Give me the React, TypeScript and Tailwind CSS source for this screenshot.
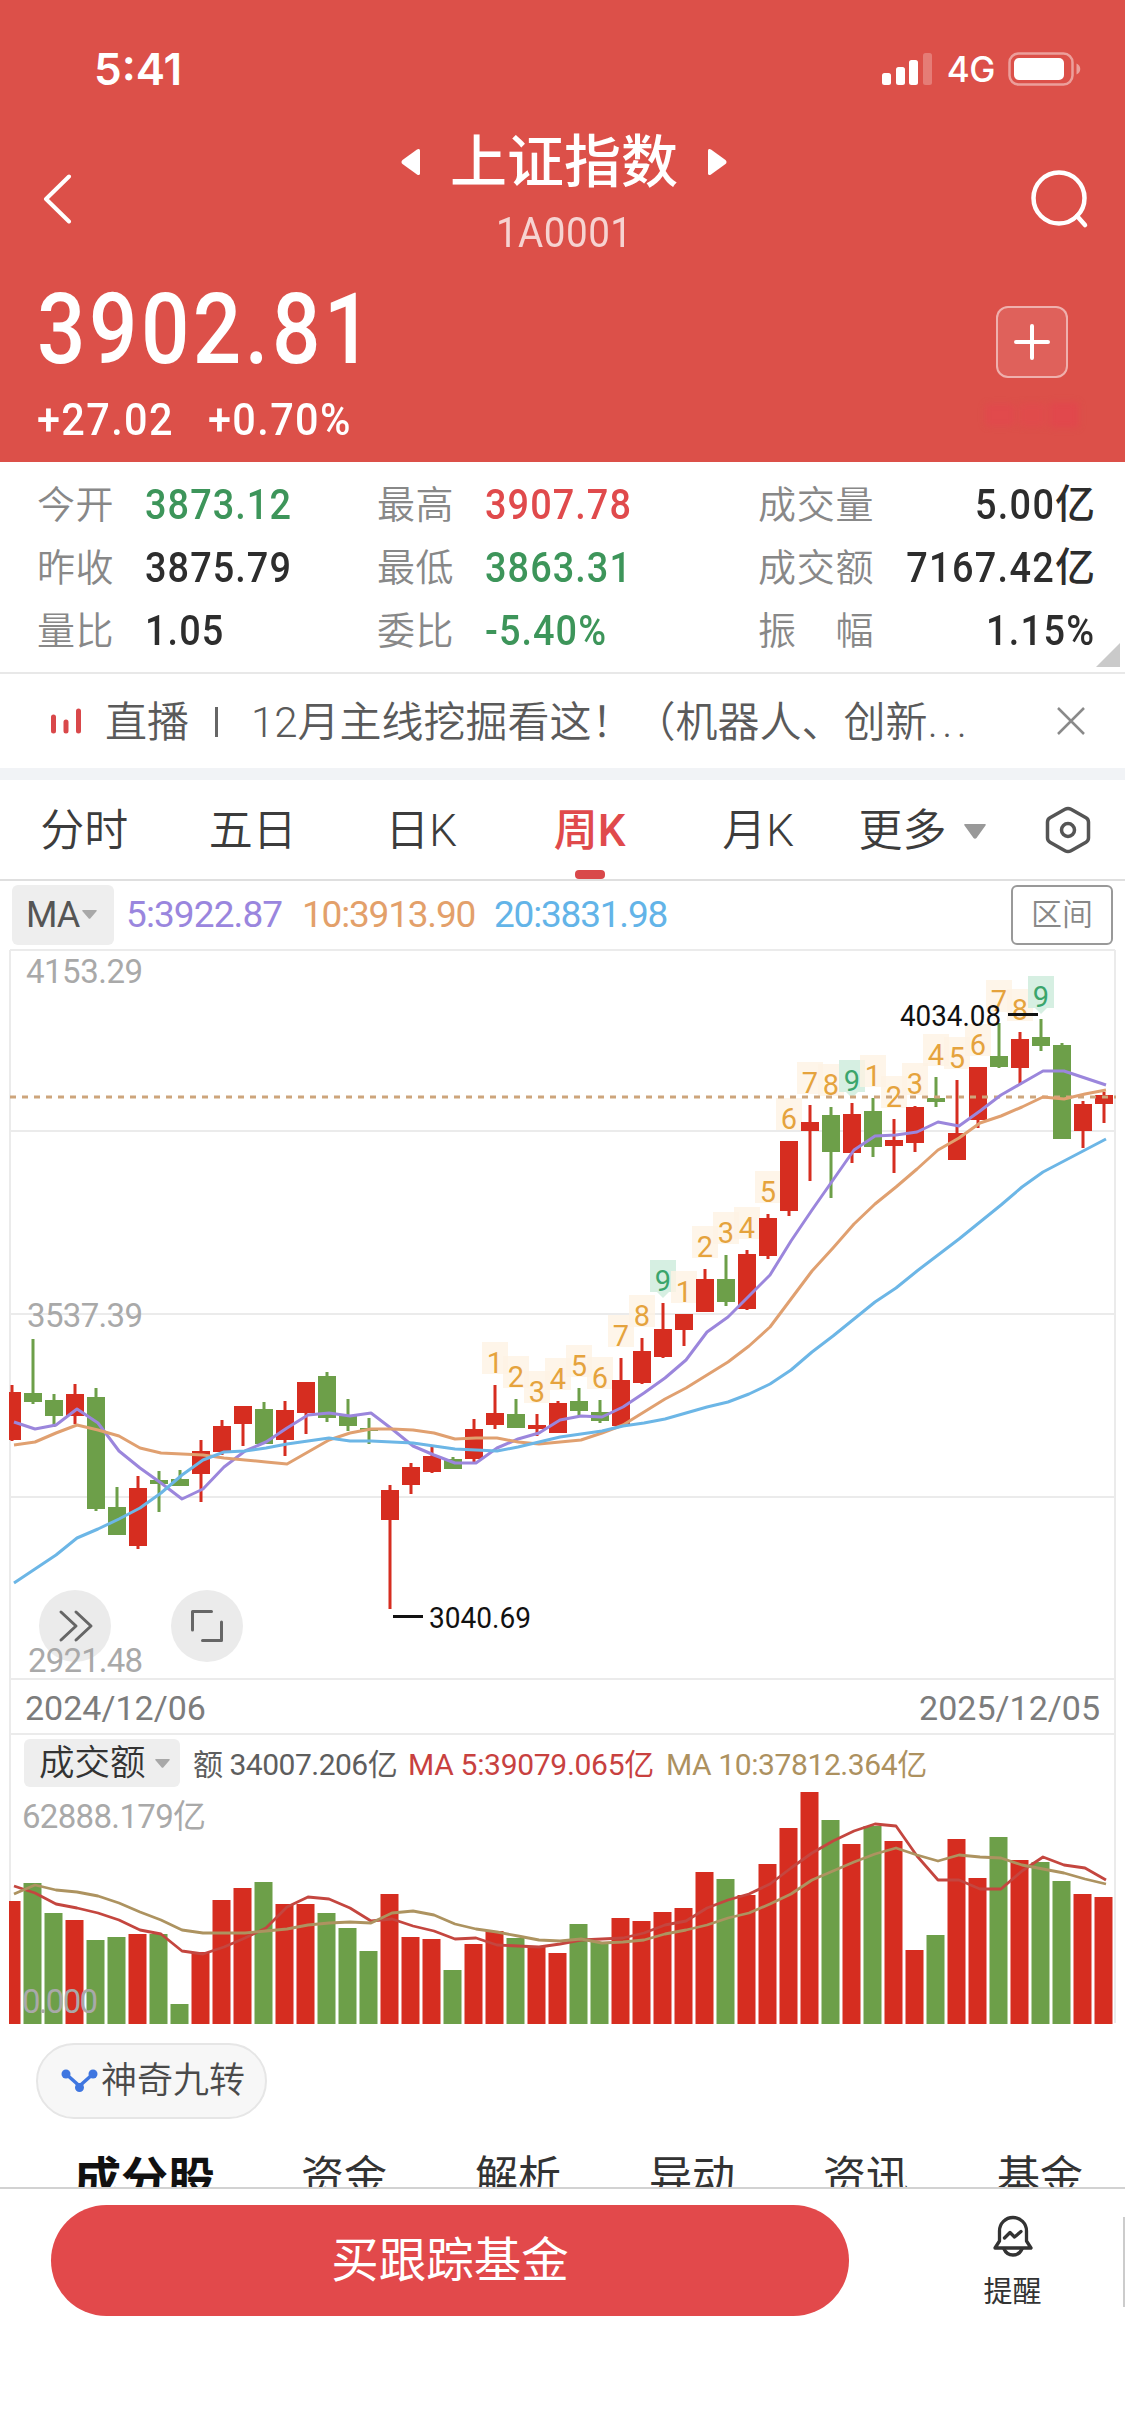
import React from 'react';

const RED = '#d62d20';
const GREEN = '#6d9f49';
const STEP = 21;
const centerX = (i: number) => 12 + i * STEP;

type Direction = 'up' | 'down';
// direction, high, body top, body bottom, low
type Candle = [Direction, number, number, number, number];

const candles: Candle[] = [
  ['up', 1385, 1392, 1440, 1441],
  ['down', 1339, 1393, 1402, 1404],
  ['down', 1394, 1400, 1416, 1427],
  ['up', 1384, 1394, 1416, 1424],
  ['down', 1388, 1397, 1509, 1511],
  ['down', 1487, 1507, 1535, 1535],
  ['up', 1476, 1488, 1546, 1549],
  ['down', 1471, 1480, 1484, 1512],
  ['down', 1470, 1479, 1486, 1486],
  ['up', 1440, 1451, 1474, 1502],
  ['up', 1420, 1426, 1452, 1455],
  ['up', 1406, 1406, 1424, 1446],
  ['down', 1402, 1409, 1444, 1444],
  ['up', 1401, 1410, 1440, 1456],
  ['up', 1382, 1382, 1413, 1434],
  ['down', 1372, 1376, 1418, 1422],
  ['down', 1399, 1416, 1426, 1431],
  ['down', 1418, 1428, 1431, 1444],
  ['up', 1485, 1490, 1520, 1609],
  ['up', 1463, 1467, 1485, 1494],
  ['up', 1447, 1456, 1472, 1473],
  ['down', 1457, 1459, 1469, 1469],
  ['up', 1419, 1429, 1459, 1462],
  ['up', 1385, 1413, 1425, 1429],
  ['down', 1399, 1414, 1428, 1428],
  ['up', 1414, 1425, 1429, 1436],
  ['up', 1401, 1403, 1433, 1433],
  ['down', 1388, 1401, 1411, 1416],
  ['down', 1400, 1412, 1421, 1423],
  ['up', 1358, 1380, 1426, 1426],
  ['up', 1338, 1351, 1383, 1384],
  ['up', 1303, 1329, 1357, 1358],
  ['up', 1314, 1314, 1330, 1346],
  ['up', 1269, 1279, 1312, 1312],
  ['down', 1255, 1279, 1302, 1306],
  ['up', 1250, 1254, 1309, 1310],
  ['up', 1214, 1218, 1256, 1259],
  ['up', 1141, 1141, 1211, 1216],
  ['up', 1105, 1122, 1131, 1181],
  ['down', 1107, 1115, 1152, 1198],
  ['up', 1103, 1114, 1153, 1163],
  ['down', 1098, 1111, 1147, 1157],
  ['up', 1119, 1140, 1146, 1173],
  ['up', 1106, 1107, 1143, 1152],
  ['down', 1077, 1098, 1102, 1107],
  ['up', 1080, 1133, 1160, 1160],
  ['up', 1067, 1067, 1120, 1128],
  ['down', 1023, 1056, 1067, 1068],
  ['up', 1032, 1039, 1068, 1085],
  ['down', 1019, 1037, 1046, 1051],
  ['down', 1043, 1045, 1139, 1139],
  ['up', 1101, 1104, 1131, 1148],
  ['up', 1092, 1095, 1104, 1123],
];

const ma5 = [
  1422, 1429, 1425, 1409, 1423, 1451, 1468, 1483, 1499, 1489, 1467, 1451, 1442, 1428, 1415, 1413, 1416, 1413,
  1429, 1446, 1455, 1463, 1463, 1448, 1439, 1433, 1420, 1416, 1417, 1407, 1393, 1378, 1360, 1332, 1317, 1296,
  1275, 1241, 1210, 1180, 1150, 1136, 1135, 1132, 1122, 1126, 1111, 1095, 1083, 1071, 1071, 1078, 1085,
];
const ma10 = [
  1445, 1442, 1433, 1425, 1430, 1436, 1448, 1453, 1454, 1455, 1458, 1460, 1462, 1464, 1452, 1440, 1433, 1429,
  1429, 1430, 1433, 1439, 1438, 1438, 1442, 1444, 1442, 1440, 1433, 1425, 1412, 1399, 1388, 1375, 1362, 1346,
  1327, 1299, 1271, 1248, 1224, 1204, 1187, 1169, 1150, 1138, 1123, 1116, 1107, 1097, 1099, 1094, 1090,
];
const ma20 = [
  1583, 1569, 1555, 1538, 1529, 1519, 1508, 1493, 1475, 1460, 1452, 1451, 1448, 1444, 1441, 1438, 1441, 1441,
  1442, 1443, 1446, 1449, 1450, 1451, 1447, 1442, 1437, 1434, 1431, 1426, 1423, 1419, 1413, 1407, 1402, 1394,
  1384, 1370, 1352, 1336, 1319, 1302, 1288, 1271, 1255, 1239, 1222, 1205, 1187, 1172, 1161, 1150, 1139,
];

const volumeTops = [
  1901, 1883, 1913, 1920, 1940, 1937, 1934, 1934, 2004, 1952, 1900, 1888, 1882, 1904, 1904, 1913, 1928, 1951,
  1894, 1937, 1939, 1970, 1944, 1931, 1938, 1947, 1953, 1924, 1942, 1918, 1921, 1912, 1908, 1872, 1879, 1895,
  1864, 1828, 1792, 1820, 1844, 1826, 1841, 1950, 1935, 1839, 1878, 1837, 1860, 1862, 1881, 1894, 1897,
];
const volumeMa5 = [
  1886, 1893, 1904, 1908, 1913, 1920, 1930, 1934, 1951, 1954, 1947, 1938, 1928, 1907, 1897, 1899, 1908, 1921,
  1919, 1926, 1931, 1939, 1938, 1945, 1946, 1947, 1944, 1940, 1939, 1938, 1933, 1925, 1921, 1908, 1900, 1894,
  1884, 1868, 1853, 1841, 1831, 1824, 1826, 1856, 1880, 1880, 1889, 1889, 1871, 1857, 1865, 1868, 1880,
];
const volumeMa10 = [
  1894, 1885, 1890, 1892, 1896, 1903, 1912, 1920, 1930, 1933, 1933, 1933, 1931, 1929, 1925, 1923, 1922, 1923,
  1913, 1911, 1915, 1924, 1929, 1932, 1936, 1940, 1941, 1939, 1943, 1942, 1940, 1934, 1930, 1925, 1918, 1913,
  1904, 1894, 1880, 1871, 1862, 1854, 1848, 1855, 1861, 1855, 1857, 1858, 1865, 1869, 1873, 1879, 1884,
];

// Nine-turn counts start at candle 23 and restart after each 9
const FIRST_COUNT = 23;
const turnCounts = Array.from({ length: 27 }, (_, i) => (i % 9) + 1);

const toPoints = (values: number[]) => values.map((y, i) => `${centerX(i) + 2},${y}`).join(' ');

const StatusBar: React.FC = () => (
  <div className="flex h-[138px] items-center justify-between pl-[94px] pr-[43px]">
    <span className="font-['Inter',sans-serif] text-[44px] font-semibold leading-none">5:41</span>
    <div className="flex items-center">
      <svg className="h-[34px] w-[52px]" viewBox="0 0 52 34" fill="currentColor">
        <rect x="0" y="21" width="9" height="12" rx="2.5" />
        <rect x="14" y="15" width="9" height="18" rx="2.5" />
        <rect x="27" y="8" width="9" height="25" rx="2.5" />
        <rect x="41" y="1" width="9" height="32" rx="2.5" opacity="0.25" />
      </svg>
      <span className="ml-[13px] font-['Inter',sans-serif] text-[35px] font-medium leading-none tracking-[-0.5px]">4G</span>
      <svg className="ml-[13px] h-[34px] w-[74px]" viewBox="0 0 74 34" fill="none">
        <rect x="1.5" y="1.5" width="63" height="31" rx="9" stroke="currentColor" strokeWidth="2.5" opacity="0.45" />
        <rect x="6" y="6" width="50" height="22" rx="5" fill="currentColor" />
        <path d="M68.5 11.5c5 2 5 9 0 11z" fill="currentColor" opacity="0.45" />
      </svg>
    </div>
  </div>
);

const Header: React.FC = () => (
  <header className="h-[462px] bg-[#dc5049] text-white">
    <StatusBar />
    <div className="flex h-[122px] items-center justify-between pl-[42px] pr-[35px]">
      <svg className="h-[50px] w-[56px]" viewBox="0 0 56 50" fill="none" stroke="currentColor" strokeWidth="4" strokeLinecap="round" strokeLinejoin="round">
        <path d="M27 2.5 4 25l23 22.5" />
      </svg>
      <div className="flex flex-col items-center self-start">
        <div className="flex h-[48px] items-center gap-[30px]">
          <svg className="h-[28px] w-[19px]" viewBox="0 0 19 28" fill="currentColor">
            <path d="M16 1.5 1.5 12a2.5 2.5 0 0 0 0 4L16 26.5c1.5 1 3 .5 3-1v-23c0-1.5-1.5-2-3-1z" />
          </svg>
          <h1 className="text-[57px] font-medium leading-none">上证指数</h1>
          <svg className="h-[28px] w-[19px]" viewBox="0 0 19 28" fill="currentColor">
            <path d="M3 1.5 17.5 12a2.5 2.5 0 0 1 0 4L3 26.5c-1.5 1-3 .5-3-1v-23c0-1.5 1.5-2 3-1z" />
          </svg>
        </div>
        <div className="flex h-[94px] items-center">
          <span className="inline-block scale-x-[0.92] text-[42px] leading-none tracking-[0.5px] opacity-75">1A0001</span>
        </div>
      </div>
      <svg className="h-[60px] w-[60px]" viewBox="0 0 60 60" fill="none" stroke="currentColor" strokeWidth="4.5" strokeLinecap="round">
        <circle cx="29" cy="29" r="25.5" />
        <path d="m47 47 8 9" />
      </svg>
    </div>
    <div className="flex justify-between pl-[37px] pr-[46px]">
      <div>
        <div className="flex h-[140px] items-center">
          <span className="inline-block origin-left scale-x-[0.87] text-[98px] font-medium leading-none tracking-[4px]">3902.81</span>
        </div>
        <div className="flex h-[38px] items-center text-[45px] font-medium leading-none tracking-[1.5px]">
          <span className="inline-block w-[171px] origin-left scale-x-[0.92]">+27.02</span>
          <span className="inline-block origin-left scale-x-[0.92]">+0.70%</span>
        </div>
      </div>
      <div className="flex flex-col items-center pt-[46px]">
        <button className="flex h-[72px] w-[72px] items-center justify-center rounded-[12px] border-2 border-white/50 bg-white/10">
          <svg className="h-[38px] w-[38px]" viewBox="0 0 38 38" stroke="currentColor" strokeWidth="4" strokeLinecap="round">
            <path d="M19 3v32M3 19h32" />
          </svg>
        </button>
        <div className="mt-[20px] flex h-[34px] items-center gap-1 blur-[3px]">
          <span className="h-[22px] w-[30px] rounded bg-[#e5434f]/50"></span>
          <span className="h-[24px] w-[26px] rounded bg-[#e5434f]/40"></span>
          <span className="h-[26px] w-[30px] rounded bg-[#e5434f]/60"></span>
        </div>
      </div>
    </div>
  </header>
);

interface StatProps {
  label: string;
  value: string;
  color?: string;
  unit?: string;
}

const Stat: React.FC<StatProps> = ({ label, value, color = 'text-[#2d2d2d]' }) => (
  <div className="flex h-[63px] items-center">
    <span className="w-[108px] text-[38px] font-[350] tracking-[0.5px] text-[#888]">{label}</span>
    <span className={`inline-block origin-left scale-x-[0.88] text-[43px] font-medium tracking-[1.2px] ${color}`}>{value}</span>
  </div>
);

const WideStat: React.FC<StatProps> = ({ label, value, unit }) => (
  <div className="flex h-[63px] items-center">
    <span className="flex-1 whitespace-pre text-[38px] font-[350] tracking-[0.8px] text-[#888]">{label}</span>
    <span className="inline-block origin-right scale-x-[0.88] text-[43px] font-medium tracking-[1.5px] text-[#2d2d2d]">{value}</span>
    {unit && <span className="text-[40px] font-medium text-[#2d2d2d]">{unit}</span>}
  </div>
);

const Stats: React.FC = () => (
  <section className="relative flex h-[212px] border-b-2 border-[#e8e8e8] pl-[37px] pr-[30px] pt-[11px] leading-none">
    <div className="w-[340px]">
      <Stat label="今开" value="3873.12" color="text-[#3d955a]" />
      <Stat label="昨收" value="3875.79" />
      <Stat label="量比" value="1.05" />
    </div>
    <div className="w-[381px]">
      <Stat label="最高" value="3907.78" color="text-[#e04a4c]" />
      <Stat label="最低" value="3863.31" color="text-[#3d955a]" />
      <Stat label="委比" value="-5.40%" color="text-[#3d955a]" />
    </div>
    <div className="flex-1">
      <WideStat label="成交量" value="5.00" unit="亿" />
      <WideStat label="成交额" value="7167.42" unit="亿" />
      <WideStat label="振　幅" value="1.15%" />
    </div>
    <svg className="absolute bottom-[5px] right-[5px] h-[24px] w-[24px]" viewBox="0 0 24 24" fill="#cacaca">
      <path d="M24 0v24H0z" />
    </svg>
  </section>
);

const LiveBanner: React.FC = () => (
  <section className="flex h-[106px] items-center border-b-[12px] border-[#f1f3f6] pl-[50px] pr-[40px] text-[#5a5a5a]">
    <svg className="h-[26px] w-[32px]" viewBox="0 0 32 26" stroke="#d9484a" strokeWidth="5" strokeLinecap="round">
      <path d="M3.5 9v14M16 14v9M28.5 3v20" />
    </svg>
    <p className="ml-[23px] flex-1 whitespace-pre pt-[4px] text-[42px] font-[350] leading-none">
      <span>直播</span>
      <span className="mx-[26px] inline-block h-[30px] w-[3px] bg-[#666]"></span>
      <span className="ml-[7px]">12月主线挖掘看这！（机器人、创新</span>
      <span className="tracking-[4.5px]">...</span>
    </p>
    <svg className="h-[28px] w-[28px]" viewBox="0 0 28 28" stroke="#8a8a8a" strokeWidth="2.5">
      <path d="m1 1 26 26M27 1 1 27" />
    </svg>
  </section>
);

const periods = ['分时', '五日', '日K', '周K', '月K'];

const PeriodTabs: React.FC = () => (
  <nav className="flex h-[101px] border-b-2 border-[#dfdfdf] text-[44px] leading-none text-[#3c3c3c]">
    {periods.map((period) => {
      const active = period === '周K';
      return (
        <div key={period} className="relative flex w-[168.5px] items-center justify-center pt-[3px]">
          <span className={active ? 'font-medium text-[#e04a4c]' : 'font-[350]'}>{period}</span>
          {active && <span className="absolute bottom-0 h-[9px] w-[30px] rounded-[4px] bg-[#d9484a]"></span>}
        </div>
      );
    })}
    <div className="flex flex-1 items-center pl-[16px] pt-[3px]">
      <span className="font-[350]">更多</span>
      <svg className="ml-[17px] h-[15px] w-[22px]" viewBox="0 0 22 15" fill="#999">
        <path d="M1 0h20c1 0 1 1 .5 1.5l-9 12.5c-.8 1-2.2 1-3 0L.5 1.5C0 1 0 0 1 0z" />
      </svg>
    </div>
    <div className="flex w-[80px] items-center">
      <svg className="h-[48px] w-[46px]" viewBox="0 0 46 48" fill="none" stroke="#555" strokeWidth="3.5" strokeLinejoin="round">
        <path d="M20 3.3a6 6 0 0 1 6 0l15 8.5a5 5 0 0 1 2.5 4.2v16a5 5 0 0 1-2.5 4.2l-15 8.5a6 6 0 0 1-6 0l-15-8.5A5 5 0 0 1 2.5 32V16A5 5 0 0 1 5 11.8z" />
        <circle cx="23" cy="24" r="6.5" />
      </svg>
    </div>
  </nav>
);

const Caret: React.FC = () => (
  <svg className="h-[9px] w-[15px]" viewBox="0 0 15 9" fill="#a8a8a8">
    <path d="M1 0h13c1 0 1 .8.5 1.3l-6 7c-.6.7-1.4.7-2 0l-6-7C0 .8 0 0 1 0z" />
  </svg>
);

const MaLegend: React.FC = () => (
  <div className="flex h-[66px] items-center pl-[12px] pr-[12px] pt-[1px] text-[37px] leading-none">
    <div className="flex h-[60px] w-[102px] items-center gap-[3px] rounded-[6px] bg-[#eee] pl-[14px] text-[36px] text-[#555]">
      <span className="tracking-[-1px]">MA</span>
      <Caret />
    </div>
    <span className="ml-[12px] w-[176px] tracking-[-0.9px] text-[#9a86de]">5:3922.87</span>
    <span className="w-[192px] tracking-[-1.2px] text-[#e3a06a]">10:3913.90</span>
    <span className="flex-1 tracking-[-1.2px] text-[#63b4e8]">20:3831.98</span>
    <button className="flex h-[60px] w-[102px] items-center justify-center rounded-[6px] border-2 border-[#999] text-[31px] font-[350] text-[#888]">
      区间
    </button>
  </div>
);

const CandleShape: React.FC<{ candle: Candle; index: number }> = ({ candle, index }) => {
  const [direction, high, top, bottom, low] = candle;
  const x = centerX(index);
  const left = index === 0 ? x - 3 : x - 9;
  return (
    <g fill={direction === 'up' ? RED : GREEN}>
      <rect x={x - 1.5} y={high} width="3" height={low - high} />
      <rect x={left} y={top} width={x + 9 - left} height={bottom - top} />
    </g>
  );
};

const TurnCount: React.FC<{ count: number; index: number }> = ({ count, index }) => {
  const x = centerX(index);
  const high = candles[index][1];
  const last = count === 9;
  return (
    <g>
      <rect x={x - 13} y={high - 43} width="26" height="32" fill={last ? '#d6efe2' : '#fef3e3'} fillOpacity={last ? 1 : 0.8} />
      {last && <path d={`M${x - 6} ${high - 11}h12l-6 6z`} fill="#d6efe2" />}
      <text x={x} y={high - 12} textAnchor="middle" fontSize="29" fill={last ? '#3ba56c' : '#e5a33d'}>
        {count}
      </text>
    </g>
  );
};

const PriceChart: React.FC = () => (
  <svg className="block h-[733px] w-full" viewBox="0 947 1125 733">
    <g stroke="#ebebeb" strokeWidth="2">
      <path d="M10 950H1115M10 1131H1115M10 1314H1115M10 1497H1115M10 1679H1115M10 950V1680M1115 950V1680" />
    </g>
    <text x="27" y="1327" fontSize="33" fill="#a9a9a9" textLength="116">3537.39</text>
    <text x="26" y="983" fontSize="33" fill="#a9a9a9" textLength="117">4153.29</text>
    {turnCounts.map((count, i) => (
      <TurnCount key={i} count={count} index={FIRST_COUNT + i} />
    ))}
    {candles.map((candle, i) => (
      <CandleShape key={i} candle={candle} index={i} />
    ))}
    <path d="M10 1097H1116" stroke="#cda57c" strokeWidth="3" strokeDasharray="6 6" />
    <g fill="none" strokeWidth="3" strokeLinejoin="round">
      <polyline points={toPoints(ma5)} stroke="#9b86dc" />
      <polyline points={toPoints(ma10)} stroke="#e0a070" />
      <polyline points={toPoints(ma20)} stroke="#6cb6e6" />
    </g>
    <g fill="#111" fontSize="30">
      <text x="900" y="1026" textLength="101" lengthAdjust="spacingAndGlyphs">4034.08</text>
      <text x="429" y="1628" textLength="102" lengthAdjust="spacingAndGlyphs">3040.69</text>
      <path d="M1008 1014.5H1038M393 1616.5H423" stroke="#111" strokeWidth="3" />
    </g>
    <circle cx="75" cy="1626" r="36" fill="#ebebeb" />
    <circle cx="207" cy="1626" r="36" fill="#ebebeb" />
    <g fill="none" stroke="#666" strokeWidth="3" strokeLinecap="round" strokeLinejoin="round">
      <path d="m61 1612 15 14-15 14M76 1612l15 14-15 14" />
      <path d="M192.5 1630v-18.5h19M221.5 1622v18.5h-19" />
    </g>
    <text x="28" y="1672" fontSize="33" fill="#a9a9a9" textLength="115">2921.48</text>
  </svg>
);

const VolumeChart: React.FC = () => (
  <svg className="block h-[235px] w-full" viewBox="0 1790 1125 235">
    <path d="M10 1790V2023M1115 1790V2023" stroke="#ebebeb" strokeWidth="2" />
    {volumeTops.map((top, i) => {
      const x = centerX(i);
      const left = i === 0 ? x - 3 : x - 9.5;
      return (
        <rect key={i} x={left} y={top} width={x + 8.5 - left} height={2024 - top} fill={candles[i][0] === 'up' ? RED : GREEN} />
      );
    })}
    <g fill="none" strokeWidth="2.8" strokeLinejoin="round">
      <polyline points={toPoints(volumeMa5)} stroke="#c4463f" />
      <polyline points={toPoints(volumeMa10)} stroke="#ad9360" />
    </g>
    <g fill="#a9a9a9" fontSize="33">
      <text x="22" y="1828" textLength="184">62888.179亿</text>
      <text x="22" y="2013" textLength="76">0.000</text>
    </g>
  </svg>
);

const Volume: React.FC = () => (
  <section>
    <div className="mx-[9px] flex h-[55px] items-center border-x-2 border-[#ebebeb] pl-[13px] text-[30px] leading-none">
      <div className="flex h-[48px] w-[156px] items-center gap-[9px] rounded-[6px] bg-[#eee] pl-[15px] pt-[2px] text-[35.5px] text-[#333]">
        <span className="font-[350]">成交额</span>
        <Caret />
      </div>
      <span className="ml-[13px] w-[215px] whitespace-nowrap pt-[4px] tracking-[-0.5px] text-[#5e5e5e]">额 34007.206亿</span>
      <span className="w-[258px] whitespace-nowrap pt-[4px] tracking-[-0.3px] text-[#c8413f]">MA 5:39079.065亿</span>
      <span className="whitespace-nowrap pt-[4px] tracking-[-0.4px] text-[#ad915f]">MA 10:37812.364亿</span>
    </div>
    <VolumeChart />
  </section>
);

const sections = ['资金', '解析', '异动', '资讯', '基金'];

const App: React.FC = () => {
  return (
    <div className="flex h-[2436px] w-[1125px] flex-col overflow-hidden bg-white font-['Roboto','Noto_Sans_CJK_SC',sans-serif]">
      <Header />
      <Stats />
      <LiveBanner />
      <PeriodTabs />
      <MaLegend />
      <PriceChart />
      <div className="mx-[9px] flex h-[55px] items-center justify-between border-x-2 border-b-2 border-[#ebebeb] px-[14px] pt-[3px] text-[34px] leading-none text-[#7c7c7c]">
        <span>2024/12/06</span>
        <span>2025/12/05</span>
      </div>
      <Volume />

      {/* Indicator switch */}
      <div className="h-[125px] pl-[36px] pt-[18px]">
        <button className="flex h-[76px] w-[231px] items-center rounded-full border-2 border-[#e6e6e6] bg-[#f7f7f7] pl-[23px] text-[36px] font-[350] leading-none text-[#4a4a4a]">
          <svg className="h-[24px] w-[37px]" viewBox="0 0 37 24">
            <path d="m5 5 13.5 12L32 5" fill="none" stroke="#3f76e0" strokeWidth="3.5" />
            <circle cx="5" cy="5" r="4.5" fill="#3f76e0" />
            <circle cx="32" cy="5" r="4.5" fill="#3f76e0" />
            <circle cx="18.5" cy="18.5" r="4.5" fill="#3f76e0" />
          </svg>
          <span className="ml-[3px] whitespace-nowrap">神奇九转</span>
        </button>
      </div>

      {/* Section tabs, partly under the bottom bar */}
      <div className="flex h-[37px] items-start overflow-hidden pl-[74px] pt-[6px] text-[43px] leading-none text-[#333]">
        <span className="w-[227px] shrink-0 text-[47px] font-bold text-[#111]">成分股</span>
        {sections.map((section) => (
          <span key={section} className="w-[174px] shrink-0">{section}</span>
        ))}
      </div>

      <footer className="flex flex-1 items-start border-t-2 border-[#d2d2d2] pt-[16px]">
        <button className="ml-[51px] h-[111px] w-[798px] rounded-full bg-[#e2494b] pt-[2px] text-[47.5px] leading-none text-white">买跟踪基金</button>
        <div className="flex flex-1 flex-col items-center pl-[53px] pt-[10px]">
          <svg className="h-[42px] w-[42px]" viewBox="0 0 42 42" fill="none" stroke="#333" strokeWidth="3.3" strokeLinecap="round" strokeLinejoin="round">
            <path d="M3 33l4.5-7V16a13.5 13.5 0 0 1 27 0v10l4.5 7z" />
            <path d="M12 34c2 4.5 5.5 6 9 6s7-1.5 9-6M12.5 23l5.5-5.5 4.5 4.5 6.5-5.5" />
          </svg>
          <span className="mt-[21px] text-[29px] leading-none text-[#333]">提醒</span>
        </div>
        <div className="mt-[12px] h-[90px] w-[2px] bg-[#ccc]"></div>
      </footer>
    </div>
  );
};

export default App;
